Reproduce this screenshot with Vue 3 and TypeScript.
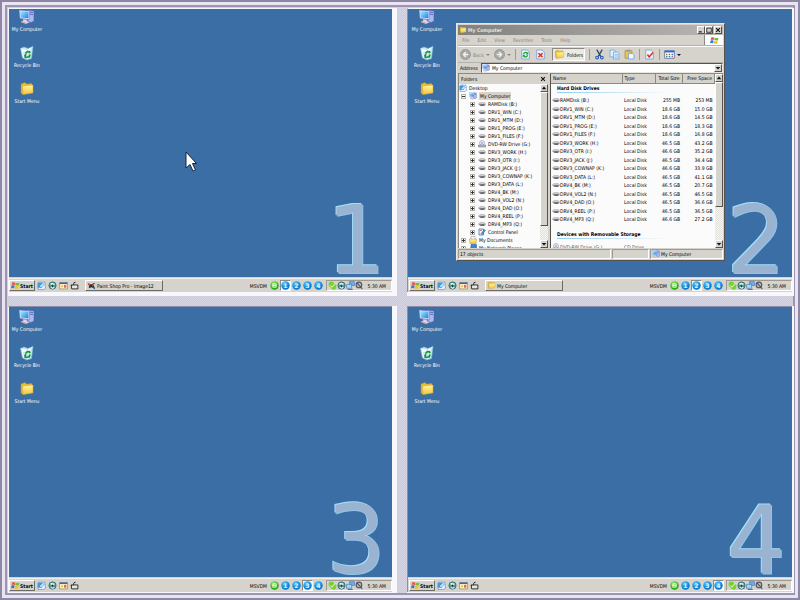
<script setup lang="ts">
interface Drive {
  name: string
  size: string
  free: string
}

interface Monitor {
  id: number
  task: string
  taskIcon: string
  explorer: boolean
}

const monitors: Monitor[] = [
  { id: 1, task: 'Paint Shop Pro - Image12', taskIcon: 'i-paint', explorer: false },
  { id: 2, task: 'My Computer', taskIcon: 'i-folder', explorer: true },
  { id: 3, task: '', taskIcon: '', explorer: false },
  { id: 4, task: '', taskIcon: '', explorer: false },
]

const shortcuts = [
  { label: 'My Computer', icon: 'i-computer' },
  { label: 'Recycle Bin', icon: 'i-bin' },
  { label: 'Start Menu', icon: 'i-folder' },
]

const quickLaunch = [
  { label: 'Internet Explorer', icon: 'i-page' },
  { label: 'Media Player', icon: 'i-globe' },
  { label: 'Calendar', icon: 'i-calendar' },
  { label: 'Show Desktop', icon: 'i-desk' },
]

const trayIcons = ['i-skype', 'i-globe', 'i-net', 'i-mute']

const menus = ['File', 'Edit', 'View', 'Favorites', 'Tools', 'Help']

const drives: Drive[] = [
  { name: 'RAMDisk (B:)', size: '255 MB', free: '253 MB' },
  { name: 'DRV1_WIN (C:)', size: '18.6 GB', free: '15.0 GB' },
  { name: 'DRV1_MTM (D:)', size: '18.6 GB', free: '14.5 GB' },
  { name: 'DRV1_PROG (E:)', size: '18.6 GB', free: '18.3 GB' },
  { name: 'DRV1_FILES (F:)', size: '18.6 GB', free: '16.8 GB' },
  { name: 'DRV3_WORK (H:)', size: '46.5 GB', free: '43.2 GB' },
  { name: 'DRV3_OTR (I:)', size: '46.6 GB', free: '35.2 GB' },
  { name: 'DRV3_JACK (J:)', size: '46.5 GB', free: '34.4 GB' },
  { name: 'DRV3_COWNAP (K:)', size: '46.6 GB', free: '33.9 GB' },
  { name: 'DRV3_DATA (L:)', size: '46.5 GB', free: '41.1 GB' },
  { name: 'DRV4_BK (M:)', size: '46.5 GB', free: '20.7 GB' },
  { name: 'DRV4_VOL2 (N:)', size: '46.5 GB', free: '46.5 GB' },
  { name: 'DRV4_DAD (O:)', size: '46.5 GB', free: '36.6 GB' },
  { name: 'DRV4_REEL (P:)', size: '46.5 GB', free: '36.5 GB' },
  { name: 'DRV4_MP3 (Q:)', size: '46.6 GB', free: '27.2 GB' },
]

const tree = [
  { name: 'Desktop', icon: 'i-page', level: 0, mark: '' },
  { name: 'My Computer', icon: 'i-computer', level: 1, mark: '-' },
  ...drives.slice(0, 5).map((d) => ({ name: d.name, icon: 'i-drive', level: 2, mark: '+' })),
  { name: 'DVD-RW Drive (G:)', icon: 'i-disc', level: 2, mark: '+' },
  ...drives.slice(5).map((d) => ({ name: d.name, icon: 'i-drive', level: 2, mark: '+' })),
  { name: 'Control Panel', icon: 'i-control', level: 2, mark: '+' },
  { name: 'My Documents', icon: 'i-docs', level: 1, mark: '+' },
  { name: 'My Network Places', icon: 'i-netplaces', level: 1, mark: '+' },
]
</script>

<template>
  <svg class="defs" aria-hidden="true">
    <defs>
      <linearGradient id="g-screen" x1="0" y1="0" x2="1" y2="1">
        <stop offset="0" stop-color="#a8f0ff" />
        <stop offset="1" stop-color="#1f7ee8" />
      </linearGradient>
      <linearGradient id="g-folder" x1="0" y1="0" x2="0" y2="1">
        <stop offset="0" stop-color="#fff6a0" />
        <stop offset="1" stop-color="#f2c63c" />
      </linearGradient>
      <radialGradient id="g-blue" cx=".4" cy=".3" r=".8">
        <stop offset="0" stop-color="#62ccff" />
        <stop offset=".6" stop-color="#0a8ae0" />
        <stop offset="1" stop-color="#0766b8" />
      </radialGradient>
      <radialGradient id="g-green" cx=".4" cy=".3" r=".8">
        <stop offset="0" stop-color="#9cf06c" />
        <stop offset=".7" stop-color="#2fae1c" />
        <stop offset="1" stop-color="#1c8a10" />
      </radialGradient>
    </defs>
    <symbol id="i-computer" viewBox="0 0 16 16">
      <path d="M9 1l6 1v10l-3 1.500-3-1z" fill="#aeb8ea" stroke="#5262b8" stroke-width=".6" />
      <path d="M10 3l4 .6M10 5l4 .6" stroke="#4d58b0" stroke-width=".8" />
      <path d="M0 1l10.500 1v8.500L1 9.500z" fill="#dce8f8" stroke="#5978c4" stroke-width=".5" />
      <path d="M1 2l8.500.8v6.500L2 8.500z" fill="url(#g-screen)" />
      <path d="M4 10l4 .6v1.400l3 1-4 2-5-2 2-1z" fill="#d9d4ee" stroke="#8d86b8" stroke-width=".5" />
      <path d="M2 12.500l5 1.500" stroke="#e8a090" stroke-width=".8" />
    </symbol>
    <symbol id="i-bin" viewBox="0 0 16 16">
      <path d="M1.500 3.500L5 2l4 1.500 5-2-1.500 12L8 15l-4.500-2z" fill="#c5e7f7" stroke="#7db8dc" stroke-width=".6" />
      <path d="M1.500 3.500L8 5l6-3.500-3.500 4L4 7z" fill="#f5fcff" />
      <path d="M3 6l1.500 6.500" stroke="#fff" />
      <path d="M6.500 8.500l2-2 2.500.8M11 9.500l-.8 2.500H8M6.200 10v2l1.800.5" fill="none" stroke="#129a22" stroke-width="1.700" />
      <path d="M10 5.800l2 1.700-2 1zM5.200 10.500l1.200-2 1.400 1.700z" fill="#129a22" />
    </symbol>
    <symbol id="i-folder" viewBox="0 0 16 16">
      <path d="M2 3L6 1.500 7.500 3 13 2.500v9l-9 2L2 12z" fill="#e9bd3c" stroke="#b78a24" stroke-width=".5" />
      <path d="M3.500 5L14 4v8L4 13.500z" fill="url(#g-folder)" stroke="#d3a52c" stroke-width=".5" />
    </symbol>
    <symbol id="i-flag" viewBox="0 0 16 16">
      <path d="M2 3c2-1.500 4-1 5.500 0L6.500 7.500C5 6.500 3 6.500 1 7.500z" fill="#f0562a" />
      <path d="M8.500 3c2 1 4.500 1 6.500 0l-1 4.500c-2 1-4.500.5-6.500-.3z" fill="#6fc02e" />
      <path d="M1 8.500c2-1 4-1 5.300 0l-1 4.700c-1.600-1-3.500-1-5.300 0z" fill="#2c78e4" />
      <path d="M7.300 8.500c2 1 4.500 1 6.500 0l-1 4.700c-2 1-4.500.8-6.500 0z" fill="#f7c020" />
    </symbol>
    <symbol id="i-page" viewBox="0 0 16 16">
      <path d="M3 2h11l1 11-3 2H2z" fill="#eaf5ff" stroke="#3e7fc8" />
      <path d="M1 3h8v9H1z" fill="#3c9ae8" />
      <path d="M4 9l6-5 3 2-6 6z" fill="#c9ecff" stroke="#2965b0" stroke-width=".8" />
    </symbol>
    <symbol id="i-globe" viewBox="0 0 16 16">
      <circle cx="8" cy="8" r="6.500" fill="#4f968d" stroke="#245660" />
      <path d="M4 4l4-1 4 2-1 3-3-2-3 2zM4 11l4-2 4 3-4 2z" fill="#d9f0e8" />
      <path d="M7 6l3 2-2 4-2-3z" fill="#1c4040" />
    </symbol>
    <symbol id="i-calendar" viewBox="0 0 16 16">
      <path d="M1 3h14v11H1z" fill="#fff8cc" stroke="#8a7038" />
      <path d="M1 2.500h14v3H1z" fill="#3f63b8" />
      <path d="M4 8h3v3H4z" fill="#e8b030" />
      <path d="M9 7h4v5H9z" fill="#e06a5a" />
    </symbol>
    <symbol id="i-desk" viewBox="0 0 16 16">
      <path d="M2 7h12v7H3zM6 7l1-4 3-1M2 7l2 2" fill="#e8e6e0" stroke="#222" stroke-width="1.600" />
    </symbol>
    <symbol id="i-paint" viewBox="0 0 16 16">
      <path d="M1 4l6 2 7-3-2 5 2 5-6-2-5 2 1-5z" fill="#3a2c20" />
      <path d="M2 3l5 4-4 1z" fill="#d8452c" />
      <path d="M9 7l4-2-2 4z" fill="#e8a030" />
      <path d="M9 10l5 4" stroke="#2050a0" stroke-width="2" />
    </symbol>
    <symbol id="i-skype" viewBox="0 0 16 16">
      <circle cx="6" cy="6" r="5" fill="#7bd22c" />
      <circle cx="10" cy="10" r="5" fill="#7bd22c" />
      <path d="M4 8l3 3 5-6" fill="none" stroke="#f4ffe8" stroke-width="1.500" />
    </symbol>
    <symbol id="i-net" viewBox="0 0 16 16">
      <path d="M6 1h9v7H6z" fill="#5fb2f4" stroke="#5668a8" />
      <path d="M1 6h9v7H1z" fill="#9fdbff" stroke="#4362a8" />
      <path d="M3 15h9" stroke="#6070a0" stroke-width="2" />
    </symbol>
    <symbol id="i-mute" viewBox="0 0 16 16">
      <circle cx="7" cy="7" r="5" fill="#b9b9c2" stroke="#555560" stroke-width="2" />
      <path d="M3 3l10 11" stroke="#555560" stroke-width="2" />
    </symbol>
    <symbol id="i-drive" viewBox="0 0 16 10">
      <path d="M1 4l3-2h9l2 2v3l-3 2H5L1 6z" fill="#8d8d92" />
      <path d="M1 4l3-2h9l2 2-3 1.500H4z" fill="#c9c9ce" />
      <path d="M5 7h7" stroke="#333" stroke-width="1.500" />
    </symbol>
    <symbol id="i-disc" viewBox="0 0 16 16">
      <circle cx="8" cy="6" r="5" fill="#e6e8f4" stroke="#8084a0" />
      <circle cx="8" cy="6" r="1.500" fill="#7880a8" />
      <path d="M1 10h14v4H1z" fill="#b8bac4" stroke="#606474" />
    </symbol>
    <symbol id="i-control" viewBox="0 0 16 16">
      <path d="M2 2h9v12H2z" fill="#f4f9ff" stroke="#2b66b4" stroke-width="1.500" />
      <path d="M6 11l7-8 2 2-7 8z" fill="#3f94dc" stroke="#194c8c" stroke-width=".8" />
      <path d="M4 5h4" stroke="#d84830" stroke-width="1.500" />
    </symbol>
    <symbol id="i-docs" viewBox="0 0 16 16">
      <path d="M4 1h8v8H4z" fill="#fff" stroke="#6b8cc4" />
      <path d="M1 6h14l-1 9H2z" fill="url(#g-folder)" stroke="#b98c20" />
    </symbol>
    <symbol id="i-netplaces" viewBox="0 0 16 16">
      <circle cx="7" cy="10" r="5" fill="#35b04a" />
      <path d="M4 1h11v8H4z" fill="#2c88e4" stroke="#1d4a94" />
    </symbol>
    <symbol id="i-refresh" viewBox="0 0 16 16">
      <path d="M2.500 1.500h8l3 3v10h-11z" fill="#eff7ff" stroke="#5d92cf" />
      <path d="M5 7.500c1-3 4-3 5.500-1.500M11 9c-1 3-4 3-5.500 1.500" fill="none" stroke="#16a030" stroke-width="1.800" />
      <path d="M12 4v4H8zM4 12.500v-4h4z" fill="#16a030" />
    </symbol>
    <symbol id="i-stop" viewBox="0 0 16 16">
      <path d="M2.500 1.500h8l3 3v10h-11z" fill="#eff7ff" stroke="#5d92cf" />
      <path d="M5 6l6 6M11 6l-6 6" stroke="#e03420" stroke-width="2.200" />
    </symbol>
    <symbol id="i-check" viewBox="0 0 16 16">
      <path d="M2.500 1.500h8l3 3v10h-11z" fill="#eff7ff" stroke="#5d92cf" />
      <path d="M5 8l2.500 3.500L13 5" fill="none" stroke="#e03420" stroke-width="2.200" />
    </symbol>
    <symbol id="i-back" viewBox="0 0 16 16">
      <circle cx="8" cy="8" r="7.300" fill="#a9a9a7" stroke="#8b8b88" />
      <path d="M12 8H5M8.500 4.500L5 8l3.500 3.500" fill="none" stroke="#f2f2ee" stroke-width="2" />
    </symbol>
    <symbol id="i-forward" viewBox="0 0 16 16">
      <circle cx="8" cy="8" r="7.300" fill="#a9a9a7" stroke="#8b8b88" />
      <path d="M4 8h7M7.500 4.500L11 8l-3.500 3.500" fill="none" stroke="#f2f2ee" stroke-width="2" />
    </symbol>
    <symbol id="i-cut" viewBox="0 0 16 16">
      <path d="M4 1l6 10M12 1L6 11" stroke="#2d456e" stroke-width="1.800" />
      <circle cx="4.500" cy="12.500" r="2" fill="none" stroke="#2660b8" stroke-width="1.600" />
      <circle cx="11.500" cy="12.500" r="2" fill="none" stroke="#2660b8" stroke-width="1.600" />
    </symbol>
    <symbol id="i-copy" viewBox="0 0 16 16">
      <path d="M1.500 1.500h6l2 2v8h-8z" fill="#e2f1ff" stroke="#5b98d6" />
      <path d="M6.500 4.500h6l2 2v8h-8z" fill="#e2f1ff" stroke="#5b98d6" />
      <path d="M8 8h5M8 10h5M8 12h5" stroke="#7fb2e4" />
    </symbol>
    <symbol id="i-paste" viewBox="0 0 16 16">
      <path d="M1.500 2.500h10v11h-10z" fill="#e8c55a" stroke="#ab8428" />
      <path d="M4 1h5v3H4z" fill="#8f9cb4" />
      <path d="M6.500 6.500h6l2 2v6h-8z" fill="#eff7ff" stroke="#5b98d6" />
    </symbol>
    <symbol id="i-views" viewBox="0 0 16 16">
      <path d="M1 2.500h14v11H1z" fill="#fff" stroke="#2d5aa8" />
      <path d="M1 2.500h14v2.500H1z" fill="#2f68c4" />
      <path d="M3 7h2v2H3zM11 10h2v2h-2z" fill="#d05038" />
      <path d="M7 7h2v2H7zM3 10h2v2H3z" fill="#3b7f50" />
      <path d="M11 7h2v2h-2zM7 10h2v2H7z" fill="#3562b0" />
    </symbol>
    <symbol id="i-down" viewBox="0 0 8 8"><path d="M1 2.500h6L4 6z" fill="#111" /></symbol>
    <symbol id="i-up" viewBox="0 0 8 8"><path d="M1 5.500h6L4 2z" fill="#111" /></symbol>
    <symbol id="i-close" viewBox="0 0 8 8"><path d="M1.500 1.500l5 5M6.500 1.500l-5 5" stroke="#111" stroke-width="1.500" /></symbol>
    <symbol id="i-max" viewBox="0 0 8 8"><path d="M1 1.500h6v5.500H1z" fill="none" stroke="#111" /></symbol>
    <symbol id="i-min" viewBox="0 0 8 8"><path d="M1 6.500h4" stroke="#111" stroke-width="1.500" /></symbol>
  </svg>

  <main class="wall">
    <section v-for="m in monitors" :key="m.id" class="cell">
      <div class="screen">
        <div class="desktop">
          <nav class="shortcuts">
            <a v-for="s in shortcuts" :key="s.label" class="shortcut" href="#">
              <svg class="icon-l"><use :href="'#' + s.icon" /></svg>
              <span>{{ s.label }}</span>
            </a>
          </nav>
          <div class="numeral">{{ m.id }}</div>

          <svg v-if="m.id === 1" class="pointer" viewBox="0 0 12 21">
            <path d="M1 1v16l4-3.500 3 6.500 2.500-1-3-6.500H11.500z" fill="#fff" stroke="#16263a" />
          </svg>

          <article v-if="m.explorer" class="window">
            <header class="titlebar">
              <svg class="icon-s"><use href="#i-folder" /></svg>
              <h1>My Computer</h1>
              <button type="button" aria-label="Minimize"><svg><use href="#i-min" /></svg></button>
              <button type="button" aria-label="Maximize"><svg><use href="#i-max" /></svg></button>
              <button type="button" aria-label="Close" class="apart"><svg><use href="#i-close" /></svg></button>
            </header>
            <div class="menubar">
              <button v-for="item in menus" :key="item" type="button">{{ item }}</button>
              <span class="brand"><svg class="icon-m"><use href="#i-flag" /></svg></span>
            </div>
            <div class="toolbar">
              <button type="button" class="dim"><svg class="icon-t"><use href="#i-back" /></svg>Back<i class="caret"></i></button>
              <button type="button" class="dim" aria-label="Forward"><svg class="icon-t"><use href="#i-forward" /></svg><i class="caret"></i></button>
              <i class="rule"></i>
              <button type="button" aria-label="Refresh"><svg class="icon-t"><use href="#i-refresh" /></svg></button>
              <button type="button" aria-label="Stop"><svg class="icon-t"><use href="#i-stop" /></svg></button>
              <button type="button" class="pressed"><svg class="icon-t"><use href="#i-folder" /></svg>Folders</button>
              <i class="rule"></i>
              <button type="button" aria-label="Cut"><svg class="icon-t"><use href="#i-cut" /></svg></button>
              <button type="button" aria-label="Copy"><svg class="icon-t"><use href="#i-copy" /></svg></button>
              <button type="button" aria-label="Paste"><svg class="icon-t"><use href="#i-paste" /></svg></button>
              <i class="rule"></i>
              <button type="button" aria-label="Properties"><svg class="icon-t"><use href="#i-check" /></svg></button>
              <i class="rule"></i>
              <button type="button" aria-label="Views"><svg class="icon-t"><use href="#i-views" /></svg><i class="caret dark"></i></button>
            </div>
            <div class="address">
              <label for="address">Address</label>
              <div class="field">
                <svg class="icon-s"><use href="#i-computer" /></svg>
                <input id="address" type="text" value="My Computer" />
                <button type="button" class="knob" aria-label="Open list"><svg><use href="#i-down" /></svg></button>
              </div>
            </div>
            <div class="panes">
              <aside class="folders">
                <div class="pane-head">
                  <span>Folders</span>
                  <button type="button" aria-label="Close folders"><svg><use href="#i-close" /></svg></button>
                </div>
                <div class="pane-body">
                  <ul class="tree">
                    <li v-for="n in tree" :key="n.name" :class="'level-' + n.level">
                      <i v-if="n.mark" class="box" :class="{ plus: n.mark === '+' }"></i>
                      <svg class="icon-s"><use :href="'#' + n.icon" /></svg>
                      <span :class="{ selected: n.mark === '-' }">{{ n.name }}</span>
                    </li>
                  </ul>
                  <div class="scroll">
                    <span class="knob"><svg><use href="#i-up" /></svg></span>
                    <span class="thumb long"></span>
                    <span class="knob end"><svg><use href="#i-down" /></svg></span>
                  </div>
                </div>
              </aside>
              <div class="listing">
                <div class="files">
                  <table>
                    <thead>
                      <tr>
                        <th class="c-name">Name</th>
                        <th class="c-type">Type</th>
                        <th class="c-size num">Total Size</th>
                        <th class="c-free num">Free Space</th>
                      </tr>
                    </thead>
                    <tbody>
                      <tr class="group"><th colspan="4"><span>Hard Disk Drives</span></th></tr>
                    </tbody>
                    <tbody class="drives">
                      <tr v-for="d in drives" :key="d.name">
                        <td><svg class="icon-s"><use href="#i-drive" /></svg>{{ d.name }}</td>
                        <td>Local Disk</td>
                        <td class="num">{{ d.size }}</td>
                        <td class="num">{{ d.free }}</td>
                      </tr>
                    </tbody>
                    <tbody>
                      <tr class="group late"><th colspan="4"><span>Devices with Removable Storage</span></th></tr>
                      <tr class="last">
                        <td><svg class="icon-s"><use href="#i-disc" /></svg>DVD-RW Drive (G:)</td>
                        <td>CD Drive</td>
                        <td></td>
                        <td></td>
                      </tr>
                    </tbody>
                  </table>
                </div>
                <div class="scroll">
                  <span class="knob"><svg><use href="#i-up" /></svg></span>
                  <span class="thumb"></span>
                  <span class="knob end"><svg><use href="#i-down" /></svg></span>
                </div>
              </div>
            </div>
            <footer class="status">
              <span class="grow">17 objects</span>
              <span class="gap"></span>
              <span class="place"><svg class="icon-s"><use href="#i-computer" /></svg>My Computer</span>
            </footer>
          </article>
        </div>

        <footer class="taskbar">
          <button type="button" class="start"><svg class="icon-m"><use href="#i-flag" /></svg>Start</button>
          <div class="quick">
            <button v-for="q in quickLaunch" :key="q.label" type="button" :aria-label="q.label">
              <svg class="icon-m"><use :href="'#' + q.icon" /></svg>
            </button>
          </div>
          <button v-if="m.task" type="button" class="task">
            <svg class="icon-m"><use :href="'#' + m.taskIcon" /></svg>{{ m.task }}
          </button>
          <div class="vdm">
            <span>MSVDM</span>
            <button type="button" aria-label="Preview desktops">
              <svg viewBox="0 0 16 16"><circle cx="8" cy="8" r="7.500" fill="url(#g-green)" /><path d="M5 5h6v6H5zM5 8h6" fill="none" stroke="#efffe8" stroke-width="1.500" /></svg>
            </button>
            <button v-for="n in 4" :key="n" type="button" :class="{ on: n === m.id }" :aria-label="'Desktop ' + n">
              <svg viewBox="0 0 16 16"><circle cx="8" cy="8" r="7.500" fill="url(#g-blue)" /><text x="8" y="12" text-anchor="middle">{{ n }}</text></svg>
            </button>
          </div>
          <div class="tray">
            <svg v-for="t in trayIcons" :key="t" class="icon-m"><use :href="'#' + t" /></svg>
            <time>5:30 AM</time>
          </div>
        </footer>
      </div>
    </section>
  </main>
</template>

<style>
body {
  margin: 0;
}
</style>

<style scoped>
* {
  box-sizing: border-box;
}

.defs {
  position: absolute;
  width: 0;
  height: 0;
}

.wall {
  display: grid;
  grid-template-columns: 1fr 1fr;
  grid-template-rows: 1fr 1fr;
  min-height: 100vh;
  font: 5px/8px 'DejaVu Sans Condensed', 'DejaVu Sans', sans-serif;
  color: #000;
  background: repeating-conic-gradient(#c6cada 0 25%, #d6d6e4 0 50%) 0 0 / 2px 2px;
  box-shadow:
    inset 0 0 0 2px #8c88a4,
    inset 0 0 0 5px #e9e3f4,
    inset 0 0 0 7px #9a96b2;
}

.cell {
  display: flex;
  padding: 8px;
}

.screen {
  --right: 5px;
  --bottom: 4px;
  flex: 1;
  min-width: 0;
  display: flex;
  flex-direction: column;
  border: solid #8f8ca8;
  border-width: 1px 0 0 1px;
  box-shadow:
    var(--right) 0 0 #f8f7fc,
    0 var(--bottom) 0 #f8f7fc,
    var(--right) var(--bottom) 0 #f8f7fc;
}

.cell:nth-child(even) {
  padding-left: 7px;
}

.cell:nth-child(n + 3) {
  padding-top: 6px;
}

.cell:nth-child(even) .screen {
  --right: 2px;
}

.cell:nth-child(n + 3) .screen {
  --bottom: 1px;
}

.cell:nth-child(odd) .screen {
  border-left-color: #f8f7fc;
}

.cell:nth-child(-n + 2) .screen {
  border-top-color: #f8f7fc;
}

button {
  display: flex;
  align-items: center;
  justify-content: center;
  padding: 0;
  border: 0;
  background: none;
  font: inherit;
  color: inherit;
}

svg {
  display: block;
  flex: none;
}

.icon-l { width: 16px; height: 16px; }
.icon-t { width: 11px; height: 11px; }
.icon-m { width: 9px; height: 9px; }
.icon-s { width: 8px; height: 8px; }

.desktop {
  position: relative;
  flex: 1;
  background: #3a6ea5;
  border-bottom: 1px solid #c9d4df;
}

.cell:nth-child(n + 3) .desktop {
  padding-top: 2px;
}

.cell:nth-child(even) .desktop,
.cell:nth-child(even) .taskbar {
  padding-left: 1px;
}

.shortcuts {
  display: flex;
  flex-direction: column;
  align-items: center;
  gap: 12px;
  width: 36px;
}

.shortcut {
  display: flex;
  flex-direction: column;
  align-items: center;
  color: #fff;
  text-decoration: none;
  white-space: nowrap;
}

.numeral {
  position: absolute;
  right: 6px;
  bottom: 0;
  font: 94px/72px 'DejaVu Sans', sans-serif;
  color: #9ab3d0;
  -webkit-text-stroke: 1px #4f7aa8;
  paint-order: stroke fill;
  text-shadow: -1px -1px 0 #a4defa, 1px 1px 0 #8dc4e8;
}

.pointer {
  position: absolute;
  left: 176px;
  top: 142px;
  width: 12px;
  height: 21px;
}

/* Taskbar */
.taskbar {
  display: flex;
  align-items: center;
  height: 14px;
  padding: 1px 0;
  background: #d6d3cc;
  border-top: 1px solid #f1efea;
}

.start,
.task {
  height: 11px;
  border: 1px solid;
  border-color: #fff #6d6b66 #6d6b66 #fff;
  background: #d6d3cc;
}

.start {
  width: 26px;
  font-weight: bold;
}

.quick {
  display: flex;
  gap: 2px;
  padding: 0 6px 0 2px;
}

.task {
  width: 78px;
  padding: 0 1px;
  justify-content: flex-start;
  gap: 1px;
}

.vdm {
  display: flex;
  align-items: center;
  margin-left: auto;
}

.vdm span {
  padding-right: 2px;
}

.vdm button {
  width: 11px;
  height: 11px;
}

.vdm .on {
  background: #f7f6f2;
  border: 1px solid;
  border-color: #8b8984 #fff #fff #8b8984;
}

.vdm svg {
  width: 9px;
  height: 9px;
}

.vdm text {
  font: bold 11px 'DejaVu Sans', sans-serif;
  fill: #d8f2ff;
}

.tray {
  display: flex;
  align-items: center;
  width: 66px;
  height: 11px;
  margin-left: 2px;
  padding-left: 1px;
  border: 1px solid;
  border-color: #9c9a94 #fff #fff #9c9a94;
}

.tray time {
  margin-left: auto;
  padding-right: 5px;
}

/* Explorer window */
.window {
  position: absolute;
  left: 48px;
  top: 14px;
  width: 269px;
  height: 238px;
  display: flex;
  flex-direction: column;
  padding: 1px;
  border: 1px solid;
  border-color: #e9e7e2 #55534f #55534f #e9e7e2;
  background: #d6d3cc;
}

.titlebar {
  display: flex;
  align-items: center;
  height: 10px;
  padding: 0 1px;
  background: linear-gradient(90deg, #808080, #b9b7b3);
  color: #e4e2dd;
}

.titlebar h1 {
  flex: 1;
  margin: 0;
  padding-left: 1px;
  font-size: 5px;
  line-height: 8px;
}

.titlebar button,
.knob {
  width: 8px;
  height: 8px;
  border: 1px solid;
  border-color: #fff #55534f #55534f #fff;
  background: #d6d3cc;
}

.titlebar .apart {
  margin-left: 1px;
}

.titlebar svg:not(.icon-s),
.knob svg,
.pane-head svg {
  width: 6px;
  height: 6px;
}

.menubar {
  display: flex;
  height: 11px;
  padding-left: 4px;
  gap: 8px;
  color: #85837e;
  border-bottom: 1px solid #b5b2ab;
}

.brand {
  display: flex;
  align-items: center;
  justify-content: center;
  width: 19px;
  margin-left: auto;
  background: #fff;
  border-left: 1px solid #8b8984;
}

.toolbar {
  display: flex;
  align-items: center;
  height: 16px;
  padding: 1px 2px;
  gap: 4px;
  border-top: 1px solid #fff;
}

.toolbar button {
  gap: 2px;
  height: 13px;
}

.toolbar .dim {
  color: #8b8984;
}

.toolbar .pressed {
  padding: 0 1px;
  margin-left: 2px;
  background: #ebe9e4;
  border: 1px solid;
  border-color: #8b8984 #fff #fff #8b8984;
}

.caret {
  border: 2px solid transparent;
  border-top-color: #8b8984;
  border-bottom: 0;
}

.caret.dark {
  border-top-color: #111;
}

.rule {
  width: 1px;
  height: 11px;
  background: #9c9a94;
}

.address {
  display: flex;
  align-items: center;
  height: 11px;
  padding-left: 2px;
  gap: 3px;
  border-top: 1px solid #b5b2ab;
}

.field {
  flex: 1;
  display: flex;
  align-items: center;
  height: 10px;
  border: 1px solid;
  border-color: #55534f #e9e7e2 #e9e7e2 #55534f;
  background: #fff;
}

.field input {
  flex: 1;
  min-width: 0;
  height: 8px;
  padding: 0 0 0 2px;
  border: 0;
  background: none;
  font: inherit;
  color: inherit;
  outline: none;
}

.panes {
  flex: 1;
  min-height: 0;
  display: flex;
  gap: 2px;
}

.folders {
  width: 90px;
  display: flex;
  flex-direction: column;
  border-top: 1px solid #8b8984;
  border-left: 1px solid #8b8984;
}

.pane-head {
  display: flex;
  justify-content: space-between;
  align-items: center;
  height: 10px;
  padding: 0 2px;
}

.pane-body {
  flex: 1;
  min-height: 0;
  display: flex;
  background: #fbfbfb;
}

.tree {
  flex: 1;
  margin: 0;
  padding: 0;
  list-style: none;
  overflow: hidden;
}

.tree li {
  display: flex;
  align-items: center;
  height: 8px;
  gap: 2px;
  white-space: nowrap;
}

.tree .level-1 { padding-left: 2px; }
.tree .level-2 { padding-left: 11px; }

.selected {
  padding: 0 1px;
  background: #d6d3cc;
}

.box {
  flex: none;
  width: 5px;
  height: 5px;
  margin-right: 1px;
  border: 1px solid #b5b2ab;
  background: linear-gradient(#333, #333) center / 3px 1px no-repeat;
}

.box.plus {
  background:
    linear-gradient(#333, #333) center / 3px 1px no-repeat,
    linear-gradient(#333, #333) center / 1px 3px no-repeat;
}

.scroll {
  width: 8px;
  display: flex;
  flex-direction: column;
  background: repeating-conic-gradient(#e2e0da 0 25%, #f6f5f2 0 50%) 0 0 / 2px 2px;
}

.scroll .knob {
  display: flex;
  align-items: center;
  justify-content: center;
}

.thumb {
  height: 72%;
  border: 1px solid;
  border-color: #fff #55534f #55534f #fff;
  background: #d6d3cc;
}

.thumb.long {
  height: 82%;
}

.end {
  margin-top: auto;
}

.listing {
  flex: 1;
  min-width: 0;
  display: flex;
  border-left: 1px solid #55534f;
  border-top: 1px solid #8b8984;
  background: #fbfbfb;
}

.files {
  flex: 1;
  min-width: 0;
  overflow: hidden;
}

table {
  width: 100%;
  table-layout: fixed;
  border-collapse: collapse;
}

td,
th {
  padding: 0 2px;
  text-align: left;
  white-space: nowrap;
  font-weight: normal;
  line-height: 8px;
}

td:first-child {
  padding-left: 1px;
}

thead th {
  height: 9px;
  line-height: 7px;
  background: #d6d3cc;
  border-right: 1px solid #8b8984;
  border-bottom: 1px solid #8b8984;
}

.c-name { width: 71px; }
.c-type { width: 33px; }
.c-size { width: 27px; }

th.num,
td.num {
  text-align: right;
}

td svg {
  display: inline-block;
  vertical-align: top;
}

.drives tr {
  height: 8px;
}

.drives tr:nth-child(even) {
  height: 9px;
}

.group {
  height: 13px;
}

.group.late {
  height: 20px;
}

.group th {
  padding-left: 6px;
  font-weight: bold;
  vertical-align: top;
}

.group.late th {
  padding-top: 7px;
}

.group span {
  display: block;
  width: 110px;
  border-bottom: 1px solid;
  border-image: linear-gradient(90deg, #8ecdf0, #fbfbfb) 1;
}

.last td {
  color: #55534f;
}

.status {
  display: flex;
  gap: 1px;
  height: 11px;
  padding-top: 1px;
}

.status span {
  display: flex;
  align-items: center;
  border: 1px solid;
  border-color: #9c9a94 #fff #fff #9c9a94;
  padding: 0 1px;
}

.status .grow { flex: 1; }
.status .gap { width: 37px; }
.status .place { width: 73px; gap: 1px; }
</style>
